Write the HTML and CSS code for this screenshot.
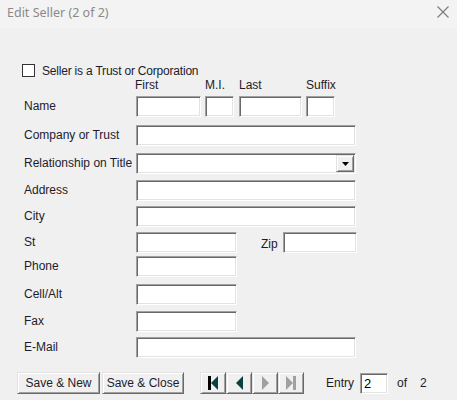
FILE: index.html
```html
<!DOCTYPE html>
<html lang="en">
<head>
    <meta charset="UTF-8">
    <meta name="viewport" content="width=device-width, initial-scale=1.0">
    <title>Edit Seller</title>
    <link rel="stylesheet" href="styles.css">
</head>
<body>
    <div class="window">
        <div class="titlebar">
            <span class="title">Edit Seller (2 of 2)</span>
            <span class="close">
                <svg width="12" height="12" viewBox="0 0 12 12"><path d="M0.5 0.5 L11.5 11.5 M11.5 0.5 L0.5 11.5" stroke="#7a7a7a" stroke-width="1.1" fill="none"/></svg>
            </span>
        </div>

        <div class="content">
            <label class="check-row">
                <span class="checkbox"></span>
                <span class="check-text">Seller is a Trust or Corporation</span>
            </label>

            <div class="name-heads">
                <span class="head-first">First</span>
                <span class="head-mi">M.I.</span>
                <span class="head-last">Last</span>
                <span class="head-suffix">Suffix</span>
            </div>

            <div class="form">
                <div class="row">
                    <span class="label">Name</span>
                    <div class="fields">
                        <input class="box w-first" type="text">
                        <input class="box w-mi" type="text">
                        <input class="box w-last" type="text">
                        <input class="box w-suffix" type="text">
                    </div>
                </div>
                <div class="row">
                    <span class="label">Company or Trust</span>
                    <input class="box w-full" type="text">
                </div>
                <div class="row">
                    <span class="label">Relationship on Title</span>
                    <div class="box w-full combo">
                        <span class="combo-btn">
                            <svg width="7" height="4" viewBox="0 0 7 4"><path d="M0 0 H7 L3.5 4 Z" fill="#000"/></svg>
                        </span>
                    </div>
                </div>
                <div class="row">
                    <span class="label">Address</span>
                    <input class="box w-full" type="text">
                </div>
                <div class="row">
                    <span class="label">City</span>
                    <input class="box w-full" type="text">
                </div>
                <div class="row">
                    <span class="label">St</span>
                    <div class="fields">
                        <input class="box w-short" type="text">
                        <span class="zip-label">Zip</span>
                        <input class="box w-zip" type="text">
                    </div>
                </div>
                <div class="row">
                    <span class="label">Phone</span>
                    <input class="box w-short" type="text">
                </div>
                <div class="row">
                    <span class="label">Cell/Alt</span>
                    <input class="box w-short" type="text">
                </div>
                <div class="row">
                    <span class="label">Fax</span>
                    <input class="box w-short" type="text">
                </div>
                <div class="row">
                    <span class="label">E-Mail</span>
                    <input class="box w-full" type="text">
                </div>
            </div>

            <div class="bottom">
                <button class="btn btn-new">Save &amp; New</button>
                <button class="btn btn-close">Save &amp; Close</button>
                <div class="nav">
                    <button class="btn nav-btn">
                        <svg width="10" height="14" viewBox="0 0 10 14"><rect x="0" y="0" width="3" height="14" fill="#000"/><path d="M10 0 V14 L3 7 Z" fill="#0d4040"/></svg>
                    </button>
                    <button class="btn nav-btn">
                        <svg width="7" height="14" viewBox="0 0 7 14"><path d="M7 0 V14 L0 7 Z" fill="#0d4040"/></svg>
                    </button>
                    <button class="btn nav-btn">
                        <svg width="7" height="14" viewBox="0 0 7 14"><path d="M0 0 V14 L7 7 Z" fill="#a0a0a0"/></svg>
                    </button>
                    <button class="btn nav-btn">
                        <svg width="10" height="14" viewBox="0 0 10 14"><path d="M0 0 V14 L7 7 Z" fill="#a0a0a0"/><rect x="7" y="0" width="3" height="14" fill="#a0a0a0"/></svg>
                    </button>
                </div>
                <span class="entry-label">Entry</span>
                <input class="box w-entry" type="text" value="2">
                <span class="of-label">of</span>
                <span class="total">2</span>
            </div>
        </div>
    </div>
</body>
</html>
```

FILE: styles.css
```css
body {
    margin: 0;
    background-color: #f0f0f0;
    font-family: "Liberation Sans", Arial, sans-serif;
    font-size: 12px;
    color: #1c1c2c;
}
.window {
    width: 457px;
    height: 400px;
    background-color: #f0f0f0;
}
.titlebar {
    height: 28px;
    display: flex;
    align-items: center;
    justify-content: space-between;
    padding: 0 8px 0 7px;
    background-color: #f3f3f3;
}
.title {
    font-family: "Noto Sans", "Open Sans", sans-serif;
    font-size: 12.5px;
    color: #8a8a8a;
    margin-top: -4px;
}
.close {
    display: flex;
    margin-top: -4px;
}
.content {
    padding: 36px 0 0 24px;
}
.check-row {
    display: flex;
    align-items: center;
    gap: 7px;
    margin-left: -2px;
    height: 13px;
}
.check-text {
    letter-spacing: -0.2px;
}
.checkbox {
    width: 11px;
    height: 11px;
    border: 1px solid #333;
    background-color: #fff;
}
.name-heads {
    display: flex;
    padding-left: 111px;
    height: 14px;
    margin-top: 1px;
    line-height: 14px;
}
.head-first { width: 70px; }
.head-mi { width: 34px; }
.head-last { width: 67px; }
.form {
    display: grid;
    grid-template-rows: 29px 28px 27px 26px 26px 24px 28px 27px 26px 21px;
    margin-top: 4px;
}
.row {
    display: flex;
    align-items: flex-start;
}
.label {
    width: 112px;
    height: 21px;
    line-height: 21px;
    flex-shrink: 0;
}
.fields {
    display: flex;
    align-items: center;
}
.box {
    box-sizing: border-box;
    height: 21px;
    margin: 0;
    padding: 1px 3px 0;
    border: 1px solid;
    border-color: #a0a0a0 #ffffff #ffffff #a0a0a0;
    box-shadow: inset 1px 1px #696969, inset -1px -1px #e3e3e3;
    background-color: #fff;
    font-family: "Liberation Sans", Arial, sans-serif;
    font-size: 13px;
    color: #000;
    outline: none;
}
.w-first { width: 65px; margin-right: 4px; }
.w-mi { width: 29px; margin-right: 5px; }
.w-last { width: 63px; margin-right: 4px; }
.w-suffix { width: 29px; }
.w-full { width: 220px; }
.w-short { width: 101px; }
.w-zip { width: 74px; }
.w-entry { width: 28px; }
.zip-label {
    margin: 2px 5px 0 24px;
}
.combo {
    position: relative;
}
.combo-btn {
    position: absolute;
    right: 1px;
    top: 1px;
    width: 18px;
    height: 17px;
    box-sizing: border-box;
    display: flex;
    align-items: center;
    justify-content: center;
    background-color: #f0f0f0;
    border: 1px solid;
    border-color: #e3e3e3 #696969 #696969 #e3e3e3;
    box-shadow: inset 1px 1px #fff, inset -1px -1px #a0a0a0;
}
.bottom {
    display: flex;
    align-items: center;
    margin-top: 14px;
    margin-left: -7px;
}
.btn {
    box-sizing: border-box;
    height: 22px;
    margin: 0;
    padding: 0;
    background-color: #f0f0f0;
    border: 1px solid;
    border-color: #e3e3e3 #696969 #696969 #e3e3e3;
    box-shadow: inset 1px 1px #fff, inset -1px -1px #a0a0a0;
    font-family: "Liberation Sans", Arial, sans-serif;
    font-size: 12px;
    color: #1c1c2c;
}
.btn-new { width: 83px; margin-right: 2px; }
.btn-close { width: 82px; }
.nav {
    display: flex;
    margin-left: 16px;
}
.nav-btn {
    width: 26px;
    display: flex;
    align-items: center;
    justify-content: center;
}
.entry-label {
    margin-left: 22px;
    margin-right: 6px;
}
.of-label {
    margin-left: 9px;
}
.total {
    margin-left: 13px;
}
```
